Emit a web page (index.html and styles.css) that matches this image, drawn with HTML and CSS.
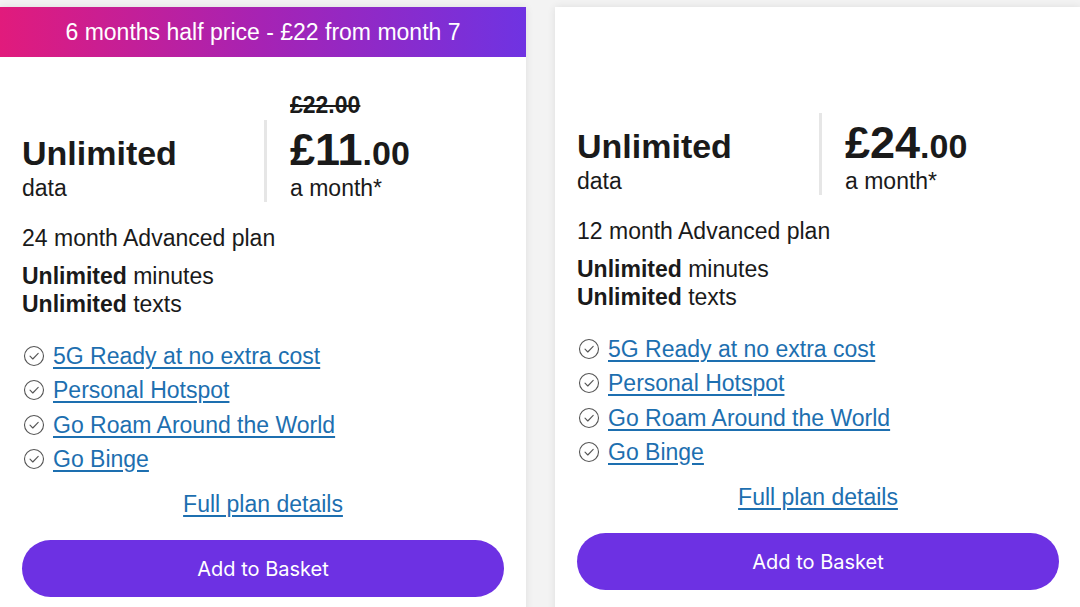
FILE: index.html
```html
<!DOCTYPE html>
<html lang="en">

<head>
  <meta charset="UTF-8">
  <title>Unlimited plans</title>
  <meta name="viewport" content="width=device-width, initial-scale=1.0">
  <link rel="stylesheet" href="styles.css">
</head>

<body>
  <main class="plans">
    <article class="card">
      <div class="promo">6 months half price - £22 from month 7</div>
      <div class="summary">
        <div class="allowance">
          <strong>Unlimited</strong>
          <span>data</span>
        </div>
        <div class="price-col">
          <s class="was">£22.00</s>
          <div class="price">
            <p class="amount">£11<small>.00</small></p>
            <p>a month*</p>
          </div>
        </div>
      </div>
      <p class="term">24 month Advanced plan</p>
      <p class="calls"><b>Unlimited</b> minutes<br><b>Unlimited</b> texts</p>
      <ul class="features">
        <li><svg viewBox="0 0 22 22"><circle cx="11" cy="11" r="9.5"/><path d="M7 11.2l2.8 2.8 5.4-5.6"/></svg><a href="#">5G Ready at no extra cost</a></li>
        <li><svg viewBox="0 0 22 22"><circle cx="11" cy="11" r="9.5"/><path d="M7 11.2l2.8 2.8 5.4-5.6"/></svg><a href="#">Personal Hotspot</a></li>
        <li><svg viewBox="0 0 22 22"><circle cx="11" cy="11" r="9.5"/><path d="M7 11.2l2.8 2.8 5.4-5.6"/></svg><a href="#">Go Roam Around the World</a></li>
        <li><svg viewBox="0 0 22 22"><circle cx="11" cy="11" r="9.5"/><path d="M7 11.2l2.8 2.8 5.4-5.6"/></svg><a href="#">Go Binge</a></li>
      </ul>
      <a class="details" href="#">Full plan details</a>
      <button class="basket">Add to Basket</button>
    </article>

    <article class="card card--plain">
      <div class="promo promo--empty"></div>
      <div class="summary">
        <div class="allowance">
          <strong>Unlimited</strong>
          <span>data</span>
        </div>
        <div class="price-col">
          <div class="price">
            <p class="amount">£24<small>.00</small></p>
            <p>a month*</p>
          </div>
        </div>
      </div>
      <p class="term">12 month Advanced plan</p>
      <p class="calls"><b>Unlimited</b> minutes<br><b>Unlimited</b> texts</p>
      <ul class="features">
        <li><svg viewBox="0 0 22 22"><circle cx="11" cy="11" r="9.5"/><path d="M7 11.2l2.8 2.8 5.4-5.6"/></svg><a href="#">5G Ready at no extra cost</a></li>
        <li><svg viewBox="0 0 22 22"><circle cx="11" cy="11" r="9.5"/><path d="M7 11.2l2.8 2.8 5.4-5.6"/></svg><a href="#">Personal Hotspot</a></li>
        <li><svg viewBox="0 0 22 22"><circle cx="11" cy="11" r="9.5"/><path d="M7 11.2l2.8 2.8 5.4-5.6"/></svg><a href="#">Go Roam Around the World</a></li>
        <li><svg viewBox="0 0 22 22"><circle cx="11" cy="11" r="9.5"/><path d="M7 11.2l2.8 2.8 5.4-5.6"/></svg><a href="#">Go Binge</a></li>
      </ul>
      <a class="details" href="#">Full plan details</a>
      <button class="basket">Add to Basket</button>
    </article>
  </main>
</body>

</html>
```

FILE: styles.css
```css
/* Colours */
:root {
  --page-bg: #f3f3f3;
  --card-bg: #ffffff;
  --text: #1a1a1a;
  --link: #1d6fb0;
  --icon: #555555;
  --rule: #e6e6e6;
  --purple: #6d31e3;
}

* {
  box-sizing: border-box;
}

body {
  margin: 0;
  padding-top: 7px;
  overflow: hidden;
  background-color: var(--page-bg);
  color: var(--text);
  font-family: "Liberation Sans", Arial, sans-serif;
  font-size: 23px;
  line-height: 28px;
}

p {margin: 0}

.plans {
  display: flex;
  gap: 29px;
}

.card {
  flex: 0 0 526px;
  display: flex;
  flex-direction: column;
  padding: 0 22px 30px 22px;
  background-color: var(--card-bg);
  box-shadow: 0 0 8px rgba(0,0,0,.09);
}

/* promo strip over the top of the card */
.promo {
  height: 50px;
  margin: 0 -22px;
  display: flex;
  align-items: center;
  justify-content: center;
  color: #fff;
  background: linear-gradient(90deg, #e11b7c 0%, #a623b4 50%, #6f33e2 100%);
}
.promo--empty {
  height: 43px;
  background: none;
}

.summary {
  display: flex;
  align-items: flex-end;
  margin-top: 33px;
}
.card--plain .summary {margin-top: 63px}

.allowance {
  width: 242px;
  display: flex;
  flex-direction: column;
}
.allowance strong {
  font-size: 34px;
  line-height: 42px;
}

.was {
  display: block;
  margin-left: 26px;
  font-weight: bold;
  line-height: 30px;
}

.price {
  border-left: 3px solid var(--rule);
  padding-left: 23px;
}
.amount {
  padding-top: 6px;
  font-weight: bold;
  font-size: 45px;
  line-height: 48px;
}
.amount small {
  font-size: 34px;
  line-height: 0;
}

.term {margin-top: 22px}
.calls {margin-top: 10px}

.features {
  list-style: none;
  margin: 21px 0 0 0;
  padding: 0;
}
.features li {
  display: flex;
  align-items: center;
  height: 34.3px;
}
.features svg {
  width: 22px;
  height: 22px;
  margin: 0 8px 0 1px;
  fill: none;
  stroke: var(--icon);
  stroke-width: 1.1;
  stroke-linecap: round;
  stroke-linejoin: round;
}

a {
  color: var(--link);
  text-decoration: underline;
  text-underline-offset: 3px;
}

.details {
  align-self: center;
  margin-top: 14px;
}

.basket {
  margin-top: 22px;
  height: 57px;
  border: none;
  border-radius: 29px;
  background-color: var(--purple);
  color: #fff;
  font-family: Inter, "Liberation Sans", sans-serif;
  font-size: 20px;
  cursor: pointer;
}
```
